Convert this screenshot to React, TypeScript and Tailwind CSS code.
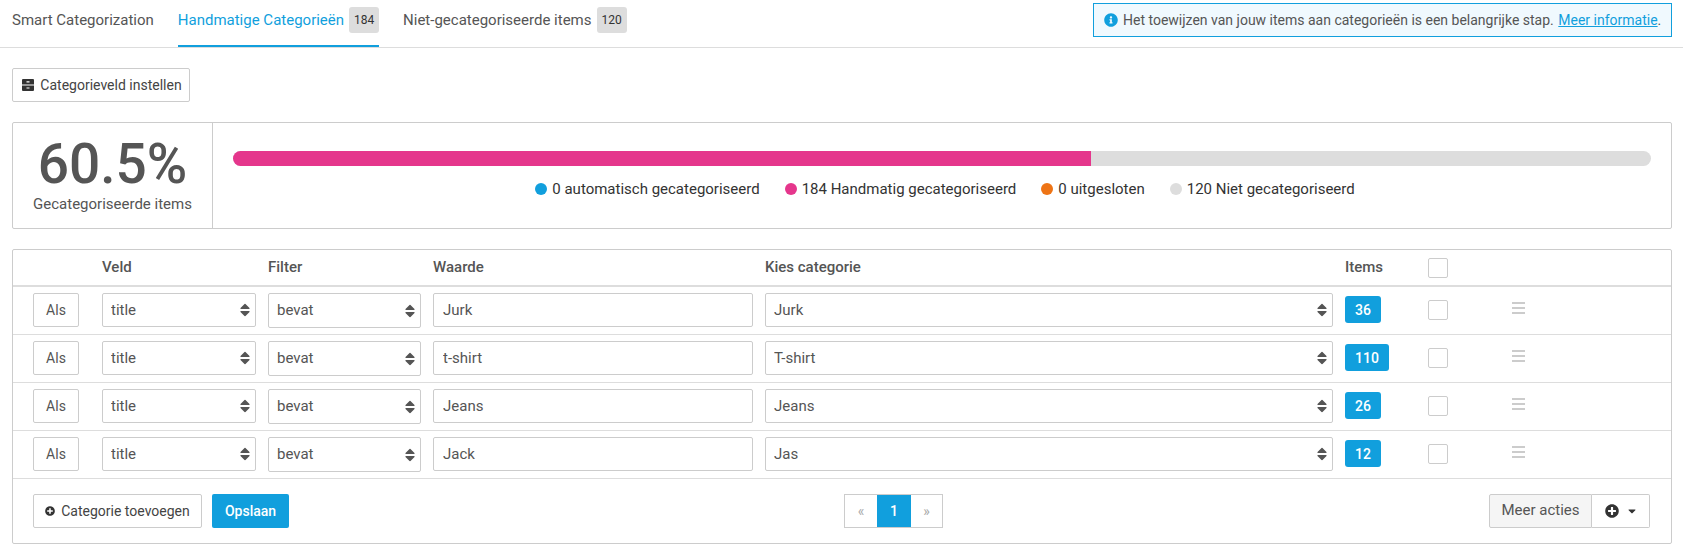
import { FaCaretDown, FaInfoCircle, FaPlusCircle } from 'react-icons/fa';

const rows = [
  { value: 'Jurk', category: 'Jurk', items: 36 },
  { value: 't-shirt', category: 'T-shirt', items: 110 },
  { value: 'Jeans', category: 'Jeans', items: 26 },
  { value: 'Jack', category: 'Jas', items: 12 },
];

const gridCols = 'grid grid-cols-[69px_166px_165px_332px_580px_83px_84px_1fr]';

function SortArrows() {
  return (
    <svg width="10" height="13" viewBox="0 0 10 13" className="absolute right-[6px] top-1/2 -translate-y-1/2 pointer-events-none">
      <path d="M5 0 9.5 4.6Q10 5.5 9 5.5H1Q0 5.5.5 4.6Z M1 7.5H9Q10 7.5 9.5 8.4L5 13 .5 8.4Q0 7.5 1 7.5Z" fill="#555" />
    </svg>
  );
}

function FilingIcon() {
  return (
    <svg width="12" height="12" viewBox="0 0 12 12" className="shrink-0">
      <path d="M1 0H11Q12 0 12 1V5.5H0V1Q0 0 1 0Z M0 6.5H12V11Q12 12 11 12H1Q0 12 0 11Z" fill="#333" />
      <path d="M4.5 2.2H7.5V3.4H4.5Z M4.5 8.4H7.5V9.6H4.5Z" fill="#fff" />
    </svg>
  );
}

function Select({ value, options, tall }: { value: string; options: string[]; tall?: boolean }) {
  return (
    <div className="relative">
      <select
        defaultValue={value}
        className={`block w-full appearance-none rounded-[2px] border border-[#ccc] bg-white pl-2 pr-6 text-[15px] text-[#555] outline-none ${tall ? 'h-[35px]' : 'h-[34px] pt-[2px]'}`}
      >
        {options.map((o) => (
          <option key={o}>{o}</option>
        ))}
      </select>
      <SortArrows />
    </div>
  );
}

function Legend({ color, label }: { color: string; label: string }) {
  return (
    <span className="flex items-center gap-[5px]">
      <span className={`size-3 rounded-full ${color}`} />
      {label}
    </span>
  );
}

function Tab({ label, badge, active }: { label: string; badge?: number; active?: boolean }) {
  return (
    <div className={`flex h-[47px] items-start gap-[5px] border-b-2 pt-[7px] text-[15px] ${active ? 'border-[#119fdd] text-[#119fdd]' : 'border-transparent text-[#555]'}`}>
      <span className="leading-[26px]">{label}</span>
      {badge !== undefined && (
        <span className="flex h-[26px] w-[30px] items-center justify-center rounded-[3px] bg-[#ddd] text-xs text-[#333]">{badge}</span>
      )}
    </div>
  );
}

function Checkbox() {
  return <input type="checkbox" className="block size-5 appearance-none rounded-[2px] border border-[#ccc] bg-white" />;
}

export default function App() {
  return (
    <div className="h-[555px] overflow-hidden bg-white font-['Roboto',sans-serif] text-sm text-[#555]">
      <div className="flex h-[48px] items-start justify-between border-b border-[#ddd] pl-3 pr-[11px]">
        <div className="flex gap-6">
          <Tab label="Smart Categorization" />
          <Tab label="Handmatige Categorieën" badge={184} active />
          <Tab label="Niet-gecategoriseerde items" badge={120} />
        </div>
        <div className="mt-[3px] flex h-[34px] w-[579px] items-center gap-[5px] border border-[#119fdd] bg-[#f0f9fe] pl-[10px]">
          <FaInfoCircle className="size-[14px] text-[#119fdd]" />
          <span>
            Het toewijzen van jouw items aan categorieën is een belangrijke stap.{' '}
            <a href="#" className="ml-px text-[#119fdd] underline">Meer informatie</a>.
          </span>
        </div>
      </div>

      <div className="px-3 pr-[11px]">
        <button className="mt-5 flex h-[34px] w-[178px] items-center justify-center gap-[6px] rounded-[2px] border border-[#ccc] bg-white pl-[2px] text-[#444]">
          <FilingIcon />
          Categorieveld instellen
        </button>

        <div className="mt-5 flex h-[107px] rounded-[2px] border border-[#ccc]">
          <div className="flex w-[200px] flex-col items-center justify-center border-r border-[#ccc]">
            <div className="text-[55px] font-medium leading-[58px] text-[#555]">60.5%</div>
            <div className="mt-px text-[15px]">Gecategoriseerde items</div>
          </div>
          <div className="flex-1 pl-5 pr-5 pt-7">
            <div className="flex h-[15px] overflow-hidden rounded-full bg-[#ddd]">
              <div className="w-[60.5%] bg-[#e5368c]" />
            </div>
            <div className="mt-[13px] flex justify-center gap-[25px] pl-[6px] text-[15px] leading-5 text-[#333]">
              <Legend color="bg-[#119fdd]" label="0 automatisch gecategoriseerd" />
              <Legend color="bg-[#e5368c]" label="184 Handmatig gecategoriseerd" />
              <Legend color="bg-[#ee7415]" label="0 uitgesloten" />
              <Legend color="bg-[#ddd]" label="120 Niet gecategoriseerd" />
            </div>
          </div>
        </div>

        <div className="mt-5 rounded-[2px] border border-[#ccc]">
          <div className={`${gridCols} h-[37px] items-center border-b-2 border-[#ddd] pl-5 text-[15px] font-medium`}>
            <span />
            <span>Veld</span>
            <span>Filter</span>
            <span>Waarde</span>
            <span>Kies categorie</span>
            <span>Items</span>
            <Checkbox />
            <span />
          </div>
          {rows.map((row) => (
            <div key={row.value} className={`${gridCols} h-[48px] items-start border-b border-[#ddd] pl-5 pt-[6px]`}>
              <div className="flex h-[34px] w-[46px] items-center justify-center rounded-[2px] border border-[#ccc]">Als</div>
              <div className="pr-3">
                <Select value="title" options={['title']} />
              </div>
              <div className="pr-3">
                <Select value="bevat" options={['bevat']} tall />
              </div>
              <div className="pr-3">
                <input readOnly value={row.value} className="block h-[34px] w-full rounded-[2px] border border-[#ccc] px-[9px] text-[15px] text-[#555] outline-none" />
              </div>
              <div className="pr-3">
                <Select value={row.category} options={[row.category]} />
              </div>
              <div className="pt-[3px]">
                <span className="inline-flex h-[27px] items-center rounded-[3px] bg-[#119fdd] px-[10px] font-medium text-white">{row.items}</span>
              </div>
              <div className="pt-[7px]">
                <Checkbox />
              </div>
              <div className="flex flex-col gap-[3px] pt-[9px]">
                <span className="h-[2px] w-[13px] bg-[#ccc]" />
                <span className="h-[2px] w-[13px] bg-[#ccc]" />
                <span className="h-[2px] w-[13px] bg-[#ccc]" />
              </div>
            </div>
          ))}
          <div className="flex h-[64px] items-start pl-5 pr-[21px] pt-[15px]">
            <div className="flex w-[811px] gap-[10px]">
              <button className="flex h-[34px] w-[169px] items-center justify-center gap-[6px] rounded-[2px] border border-[#ccc] bg-white text-[#444]">
                <FaPlusCircle className="size-[10px] text-[#333]" />
                Categorie toevoegen
              </button>
              <button className="h-[34px] w-[77px] rounded-[2px] bg-[#119fdd] font-medium text-white">Opslaan</button>
            </div>
            <div className="flex h-[34px] border border-[#ccc]">
              <span className="flex w-[32px] items-center justify-center text-[#aaa]">«</span>
              <span className="flex w-[34px] items-center justify-center bg-[#119fdd] font-medium text-white">1</span>
              <span className="flex w-[31px] items-center justify-center text-[#aaa]">»</span>
            </div>
            <div className="flex h-[34px] flex-1 justify-end">
              <button className="w-[103px] rounded-l-[2px] border border-[#ccc] bg-[#f5f5f5] text-[15px] text-[#555]">Meer acties</button>
              <button className="flex w-[58px] items-center justify-center gap-[7px] rounded-r-[2px] border border-l-0 border-[#ccc] bg-white pl-px text-[#333]">
                <FaPlusCircle className="size-[14px]" />
                <FaCaretDown className="size-[12px]" />
              </button>
            </div>
          </div>
        </div>
      </div>
    </div>
  );
}
